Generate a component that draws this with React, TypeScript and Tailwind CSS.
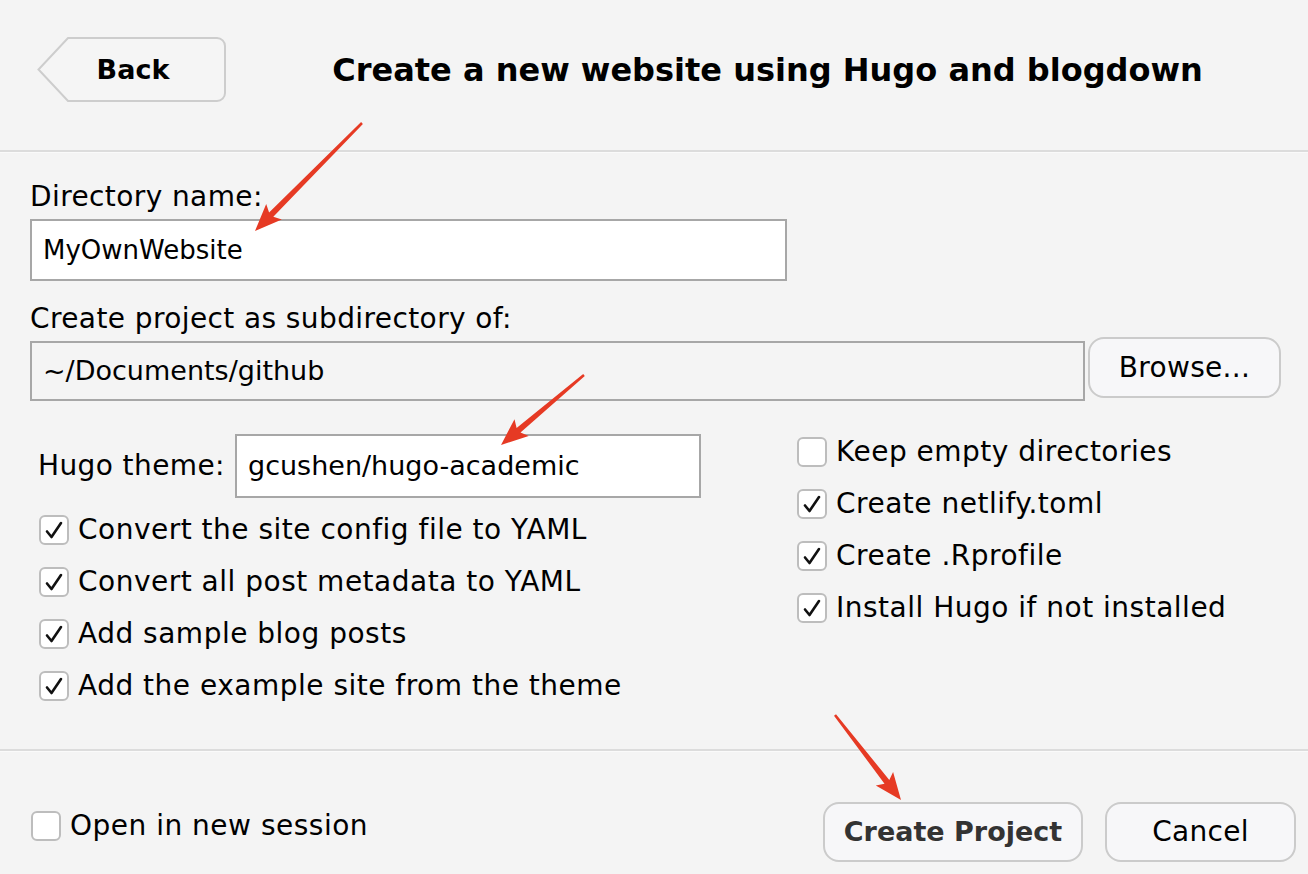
import React from "react";

const FONT = { fontFamily: '"DejaVu Sans", "Liberation Sans", sans-serif' };

function Check({ checked }: { checked: boolean }) {
  return (
    <span className="flex h-[30px] w-[30px] shrink-0 items-center justify-center rounded-[6px] border-2 border-[#bdbdbd] bg-white">
      {checked && (
        <svg width="22" height="22" viewBox="0 0 22 22">
          <path d="M4 12.5 L8.5 18 L18 4" fill="none" stroke="#111" strokeWidth="2.6" strokeLinecap="round" strokeLinejoin="round" />
        </svg>
      )}
    </span>
  );
}

function CheckRow({ checked, label }: { checked: boolean; label: string }) {
  return (
    <div className="flex h-[52px] items-center gap-[9px]">
      <Check checked={checked} />
      <span className="text-[28px] leading-none tracking-[0.5px] text-black">{label}</span>
    </div>
  );
}

function arrowPoints(tx: number, ty: number, px: number, py: number) {
  const dx = px - tx;
  const dy = py - ty;
  const len = Math.hypot(dx, dy);
  const ux = dx / len;
  const uy = dy / len;
  const nx = -uy;
  const ny = ux;
  const headLen = 27;
  const headHalf = 11;
  const bx = px - ux * headLen;
  const by = py - uy * headLen;
  const wTail = 1.3;
  const wBase = 3;
  const pts = [
    [tx + nx * wTail, ty + ny * wTail],
    [bx + ux * 4 + nx * wBase, by + uy * 4 + ny * wBase],
    [bx + nx * headHalf, by + ny * headHalf],
    [px, py],
    [bx - nx * headHalf, by - ny * headHalf],
    [bx + ux * 4 - nx * wBase, by + uy * 4 - ny * wBase],
    [tx - nx * wTail, ty - ny * wTail],
  ];
  return pts.map((p) => p.map((v) => v.toFixed(1)).join(",")).join(" ");
}

export default function App() {
  return (
    <div className="relative h-[874px] w-[1308px] overflow-hidden bg-[#f4f4f4] text-black" style={FONT}>
      {/* Header */}
      <div className="flex h-[150px] items-start pt-[37px]">
        <div className="ml-[37px] flex h-[65px] w-[190px] items-center">
          <div className="relative flex h-[65px] w-[190px] items-center justify-center pl-[2px]">
            <svg className="absolute inset-0" width="190" height="65" viewBox="0 0 190 65">
              <path
                d="M31,1 H180 A8,8 0 0 1 188,9 V56 A8,8 0 0 1 180,64 H31 L1.5,32.5 Z"
                fill="#f5f5f5"
                stroke="#cdcdcd"
                strokeWidth="2"
              />
            </svg>
            <span className="relative text-[27px] font-bold leading-none">Back</span>
          </div>
        </div>
        <div className="flex h-[65px] flex-1 items-center justify-center">
          <span className="text-[32px] font-bold leading-none">Create a new website using Hugo and blogdown</span>
        </div>
      </div>
      <div className="h-[2px] bg-[#dcdcdc]" />
      <div className="h-[1px] bg-[#fafafa]" />

      {/* Form */}
      <div className="pl-[30px] pr-[27px]">
        <div className="mt-[27px] h-[34px] text-[28px] leading-[34px] tracking-[0.4px]">Directory name:</div>
        <div className="mt-[5px] flex h-[62px] w-[757px] items-center border-2 border-[#a7a7a7] bg-white pl-[11px] text-[26px]">
          MyOwnWebsite
        </div>
        <div className="mt-[21px] h-[34px] text-[28px] leading-[34px] tracking-[0.4px]">Create project as subdirectory of:</div>
        <div className="mt-[1px] flex items-start gap-[3px]">
          <div className="mt-[4px] flex h-[60px] w-[1055px] items-center border-2 border-[#a7a7a7] bg-[#f4f4f4] pl-[11px] text-[27px]">
            ~/Documents/github
          </div>
          <div className="flex h-[61px] w-[193px] items-center justify-center rounded-[16px] border-2 border-[#cbcbcb] bg-[#f7f7f9] text-[28px] tracking-[0.3px]">
            Browse...
          </div>
        </div>

        <div className="mt-[25px] flex">
          <div className="w-[767px] pl-[8px] pt-[8px]">
            <div className="flex h-[64px] items-center">
              <span className="w-[197px] text-[28px] leading-none tracking-[0.4px]">Hugo theme:</span>
              <div className="flex h-[64px] w-[466px] items-center border-2 border-[#a7a7a7] bg-white pl-[11px] text-[27px]">
                gcushen/hugo-academic
              </div>
            </div>
            <div className="mt-[6px] pl-[1px]">
              <CheckRow checked label="Convert the site config file to YAML" />
              <CheckRow checked label="Convert all post metadata to YAML" />
              <CheckRow checked label="Add sample blog posts" />
              <CheckRow checked label="Add the example site from the theme" />
            </div>
          </div>
          <div className="flex-1">
            <CheckRow checked={false} label="Keep empty directories" />
            <CheckRow checked label="Create netlify.toml" />
            <CheckRow checked label="Create .Rprofile" />
            <CheckRow checked label="Install Hugo if not installed" />
          </div>
        </div>
      </div>

      <div className="mt-[37px] h-[2px] bg-[#dcdcdc]" />
      <div className="h-[1px] bg-[#fafafa]" />

      {/* Footer */}
      <div className="flex items-start pl-[31px] pr-[12px]">
        <div className="mt-[59px] flex items-center gap-[9px]">
          <Check checked={false} />
          <span className="text-[28px] leading-none tracking-[0.5px]">Open in new session</span>
        </div>
        <div className="ml-auto mt-[50px] flex gap-[22px]">
          <div className="flex h-[60px] w-[260px] items-center justify-center rounded-[16px] border-2 border-[#cbcbcb] bg-[#f7f7f9] text-[27px] font-bold text-[#333333]">
            Create Project
          </div>
          <div className="flex h-[60px] w-[191px] items-center justify-center rounded-[16px] border-2 border-[#cbcbcb] bg-[#f7f7f9] text-[28px] tracking-[0.3px]">
            Cancel
          </div>
        </div>
      </div>

      {/* Annotation arrows */}
      <svg className="pointer-events-none absolute inset-0" width="1308" height="874" viewBox="0 0 1308 874">
        <polygon points={arrowPoints(362, 123, 255, 231)} fill="#e63a24" />
        <polygon points={arrowPoints(584, 375, 501, 445)} fill="#e63a24" />
        <polygon points={arrowPoints(835, 715, 901, 800)} fill="#e63a24" />
      </svg>
    </div>
  );
}
